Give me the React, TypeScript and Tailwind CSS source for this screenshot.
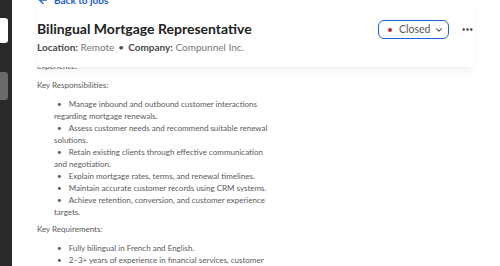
import { ChevronDown, MoreHorizontal, ArrowLeft } from "lucide-react";

const responsibilities = [
  "Manage inbound and outbound customer interactions regarding mortgage renewals.",
  "Assess customer needs and recommend suitable renewal solutions.",
  "Retain existing clients through effective communication and negotiation.",
  "Explain mortgage rates, terms, and renewal timelines.",
  "Maintain accurate customer records using CRM systems.",
  "Achieve retention, conversion, and customer experience targets.",
];

const requirements = [
  "Fully bilingual in French and English.",
  "2–3+ years of experience in financial services, customer service, or a call center environment.",
];

function Bullets({ items }: { items: string[] }) {
  return (
    <ul className="pl-[17px] mt-[7px]">
      {items.map((t) => (
        <li key={t} className="w-[218px]">
          <span className="ml-[3px] mr-[7px]">•</span>
          {t}
        </li>
      ))}
    </ul>
  );
}

export default function App() {
  return (
    <div className="flex h-[266px] w-[500px] overflow-hidden bg-white font-['Lato',sans-serif]">
      {/* Sidebar strip */}
      <aside className="w-[12px] shrink-0 bg-[#292929] flex flex-col">
        <div className="mt-[18px] h-[25px] w-[8px] rounded-r-[3px] bg-white" />
        <div className="mt-[29px] h-[28px] w-[8px] rounded-r-[3px] bg-[#6a6a6a]" />
      </aside>

      <main className="flex-1 flex flex-col pl-[25px] pr-[26px]">
        {/* Header */}
        <header className="relative z-10 bg-white h-[67px] shrink-0 shadow-[0_5px_8px_-2px_rgba(0,0,0,0.07)]">
          <a className="-mt-[6px] flex items-center gap-[5px] text-[10px] font-bold text-[#1a5dd0] leading-[12px]">
            <ArrowLeft size={12} strokeWidth={2.5} />
            Back to jobs
          </a>
          <div className="mt-[13px] flex items-start justify-between">
            <div>
              <h1 className="text-[14px] font-bold text-[#222] leading-[20px]">
                Bilingual Mortgage Representative
              </h1>
              <p className="mt-[2px] text-[10px] leading-[13px] text-[#777]">
                <span className="font-bold text-[#4a4a4a]">Location:</span> Remote
                <span className="mx-[4px] text-[#4a4a4a]">•</span>
                <span className="font-bold text-[#4a4a4a]">Company:</span> Compunnel Inc.
              </p>
            </div>
            <div className="flex items-center gap-[12px] mt-[1px]">
              <button className="flex items-center h-[19px] w-[71px] rounded-[6px] border-[1.5px] border-[#1f5fd6] pl-[9px] text-[10.5px] text-[#555]">
                <span className="h-[4px] w-[4px] rounded-full bg-[#c0262d]" />
                <span className="ml-[7px]">Closed</span>
                <ChevronDown size={10} strokeWidth={2.5} className="ml-[4px] text-[#333]" />
              </button>
              <MoreHorizontal size={13} strokeWidth={2.5} className="text-[#333]" />
            </div>
          </div>
        </header>

        {/* Body */}
        <section className="-mt-[7px] text-[8px] leading-[12px] text-[#5a5a5a]">
          <p>experience.</p>
          <p className="mt-[7px]">Key Responsibilities:</p>
          <Bullets items={responsibilities} />
          <p className="mt-[5px]">Key Requirements:</p>
          <Bullets items={requirements} />
        </section>
      </main>
    </div>
  );
}
